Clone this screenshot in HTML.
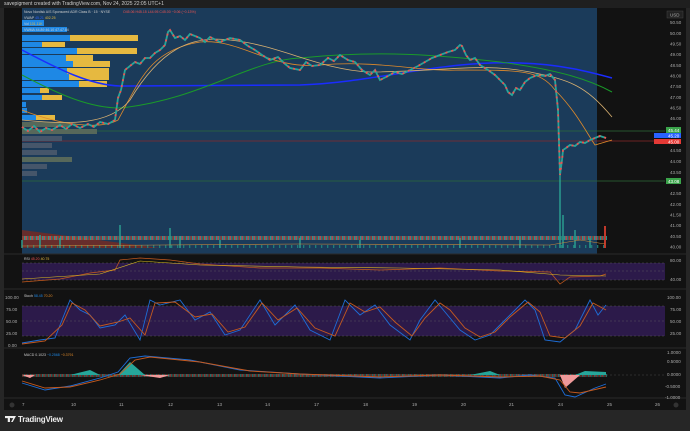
<!DOCTYPE html>
<html><head><meta charset="utf-8"><style>
*{margin:0;padding:0;box-sizing:border-box}
body{width:690px;height:431px;background:#262626;font-family:"Liberation Sans",sans-serif;overflow:hidden;position:relative;color:#bbb}
.top{position:absolute;left:0;top:0;width:690px;height:8px;background:#1f1f1f;font-size:5px;color:#ccc;padding-left:4px;line-height:8px}
svg{position:absolute;left:0;top:0}
.ax{font-size:4.5px;fill:#aaa}
</style></head><body>
<div class="top">savepigment created with TradingView.com, Nov 24, 2025 22:05 UTC+1</div>
<svg width="690" height="431" viewBox="0 0 690 431">
<defs>
<pattern id="vol" width="6" height="20" patternUnits="userSpaceOnUse">
<rect x="0" y="8" width="1.3" height="12" fill="#26a69a"/><rect x="1.5" y="12" width="1.3" height="8" fill="#ef5350"/><rect x="3" y="5" width="1.3" height="15" fill="#1f8a80"/><rect x="4.5" y="10" width="1.3" height="10" fill="#c0392b"/>
</pattern>
</defs>
<rect x="4" y="8" width="682" height="402" fill="#121212"/>
<rect x="22" y="8" width="575" height="246" fill="#1b3b5a"/>
<line x1="4" y1="254" x2="686" y2="254" stroke="#2a2a2a"/>
<line x1="4" y1="289" x2="686" y2="289" stroke="#2a2a2a"/>
<line x1="4" y1="348" x2="686" y2="348" stroke="#2a2a2a"/>
<line x1="4" y1="398" x2="686" y2="398" stroke="#2a2a2a"/>
<g class="ax">
<rect x="667" y="11" width="16" height="7" fill="#222" stroke="#444" stroke-width=".5"/><text x="670" y="16.5">USD</text>
<text x="670" y="24">50.50</text><text x="670" y="35">50.00</text><text x="670" y="45.5">49.50</text><text x="670" y="56">49.00</text><text x="670" y="67">48.50</text><text x="670" y="77.5">48.00</text><text x="670" y="88">47.50</text><text x="670" y="99">47.00</text><text x="670" y="109.5">46.50</text><text x="670" y="120">46.00</text><text x="670" y="152">44.50</text><text x="670" y="163">44.00</text><text x="670" y="174">43.50</text><text x="670" y="195">42.50</text><text x="670" y="206">42.00</text><text x="670" y="216.5">41.50</text><text x="670" y="227">41.00</text><text x="670" y="238">40.50</text><text x="670" y="248.5">40.00</text>
<text x="670" y="262">80.00</text><text x="670" y="281">40.00</text>
<text x="667" y="299">100.00</text><text x="670" y="311">75.00</text><text x="670" y="323">50.00</text><text x="670" y="335">25.00</text>
<text x="667" y="354">1.0000</text><text x="667" y="363">0.5000</text><text x="667" y="376">0.0000</text><text x="665" y="388">-0.5000</text><text x="665" y="399">-1.0000</text>
<text x="5" y="299">100.00</text><text x="6" y="311">75.00</text><text x="6" y="323">50.00</text><text x="6" y="335">25.00</text><text x="8" y="347">0.00</text>
</g>
<line x1="22" y1="131" x2="665" y2="131" stroke="#2d6b3a" stroke-width=".7"/>
<line x1="22" y1="141" x2="665" y2="141" stroke="#8b2a2a" stroke-width=".7"/>
<line x1="22" y1="181" x2="665" y2="181" stroke="#2d6b3a" stroke-width=".7"/>
<rect x="666" y="127" width="15" height="6" fill="#3aa34a"/><text x="668" y="132" font-size="4.5" fill="#fff">45.44</text>
<rect x="654" y="133" width="12" height="5" fill="#2962ff"/><rect x="666" y="133" width="15" height="5" fill="#2962ff"/><text x="668" y="137.5" font-size="4.5" fill="#fff">45.20</text>
<rect x="654" y="139" width="12" height="5" fill="#e53935"/><rect x="666" y="139" width="15" height="5" fill="#e53935"/><text x="668" y="143.5" font-size="4.5" fill="#fff">45.00</text>
<rect x="666" y="178" width="15" height="6" fill="#3aa34a"/><text x="668" y="183" font-size="4.5" fill="#fff">43.08</text>
<g>
<rect x="22" y="20" width="22" height="6" fill="#1e88e5"/><rect x="22" y="27" width="45" height="5" fill="#1e88e5"/><rect x="22" y="35" width="70" height="6" fill="#1e88e5"/><rect x="70" y="35" width="68" height="6" fill="#e6b940"/>
<rect x="22" y="42" width="20" height="5" fill="#1e88e5"/><rect x="42" y="42" width="23" height="5" fill="#e6b940"/>
<rect x="22" y="48" width="55" height="6" fill="#1e88e5"/><rect x="77" y="48" width="60" height="6" fill="#e6b940"/>
<rect x="22" y="55" width="44" height="6" fill="#1e88e5"/><rect x="66" y="55" width="27" height="6" fill="#e6b940"/>
<rect x="22" y="61" width="51" height="6" fill="#1e88e5"/><rect x="73" y="61" width="37" height="6" fill="#e6b940"/>
<rect x="22" y="68" width="45" height="6" fill="#1e88e5"/><rect x="67" y="68" width="42" height="6" fill="#e6b940"/>
<rect x="22" y="74" width="47" height="6" fill="#1e88e5"/><rect x="69" y="74" width="40" height="6" fill="#e6b940"/>
<rect x="22" y="81" width="57" height="6" fill="#1e88e5"/><rect x="79" y="81" width="28" height="6" fill="#e6b940"/>
<rect x="22" y="88" width="18" height="5" fill="#1e88e5"/><rect x="40" y="88" width="9" height="5" fill="#e6b940"/>
<rect x="22" y="95" width="20" height="5" fill="#1e88e5"/><rect x="42" y="95" width="20" height="5" fill="#e6b940"/>
<rect x="22" y="102" width="4" height="5" fill="#1e88e5"/><rect x="22" y="108" width="5" height="5" fill="#1e88e5"/>
<rect x="22" y="115" width="14" height="5" fill="#1e88e5"/><rect x="36" y="115" width="19" height="5" fill="#e6b940"/>
<rect x="22" y="122" width="48" height="5" fill="#57685a"/><rect x="22" y="129" width="75" height="5" fill="#57685a"/>
<rect x="22" y="136" width="40" height="5" fill="#46566a"/><rect x="22" y="143" width="30" height="5" fill="#46566a"/>
<rect x="22" y="150" width="35" height="5" fill="#46566a"/><rect x="22" y="157" width="50" height="5" fill="#57685a"/>
<rect x="22" y="164" width="25" height="5" fill="#46566a"/><rect x="22" y="171" width="15" height="5" fill="#46566a"/>
</g>
<polygon points="22,230 160,248 22,248" fill="#7a2a20" opacity=".8"/>
<rect x="22" y="236" width="585" height="12" fill="url(#vol)" opacity=".85"/>
<path d="M22 248 V240 M40 248 V235 M60 248 V238 M120 248 V225 M170 248 V228 M180 248 V236 M220 248 V240 M300 248 V238 M360 248 V240 M460 248 V238 M520 248 V236 M560 248 V170 M563 248 V215 M575 248 V230 M590 248 V238" stroke="#2a9d8f" stroke-width="1.5"/>
<rect x="604" y="226" width="2" height="22" fill="#c0392b"/>
<path d="M22 246 L300 244 L550 245 L580 240 L605 244" stroke="#c98a3a" stroke-width=".6" fill="none"/>
<path d="M22 50 C60 70 90 85 120 86 L300 85 C380 82 440 60 520 63 C560 64 590 72 612 78" stroke="#1a2cff" stroke-width="1.5" fill="none"/>
<path d="M22 75 C60 95 90 108 120 108 C200 100 250 60 300 58 C380 50 440 55 500 62 C560 70 590 80 612 92" stroke="#1a9a2a" stroke-width="1" fill="none"/>
<path d="M22 110 C60 125 100 130 118 120 C140 80 150 50 200 42 C240 38 270 70 320 65 C380 60 420 72 460 70 C520 70 540 70 555 90 C575 110 585 130 595 145 L612 140" stroke="#e08a2a" stroke-width=".8" fill="none"/>
<path d="M22 120 C70 125 110 125 130 100 C160 50 190 35 230 40 C280 45 320 70 370 72 C440 72 480 62 530 72 C570 80 585 85 612 117" stroke="#d8b070" stroke-width=".8" fill="none"/>
<g id="px">
<path id="pp" d="M22 127 L28 131 L34 126 L40 132 L46 128 L52 130 L60 125 L66 129 L72 124 L80 128 L88 124 L94 127 L100 122 L108 124 L115 120 L118 98 L121 90 L125 70 L130 66 L135 62 L140 64 L145 58 L150 58 L155 53 L160 50 L165 45 L168 32 L170 30 L175 38 L180 36 L185 40 L190 34 L200 38 L205 42 L210 37 L220 42 L230 38 L240 40 L248 46 L255 50 L262 55 L270 60 L278 57 L285 64 L290 68 L300 70 L306 62 L312 66 L320 65 L328 58 L334 61 L340 55 L348 60 L355 62 L362 70 L370 75 L375 70 L380 80 L388 76 L395 72 L402 74 L410 70 L418 66 L425 62 L432 58 L440 55 L448 52 L455 50 L460 45 L462 46 L466 55 L470 60 L475 58 L480 65 L488 70 L495 75 L500 80 L505 85 L508 92 L512 95 L516 88 L520 90 L525 82 L530 78 L537 75 L545 76 L550 74 L555 80 L558 110 L560 175 L562 160 L563 150 L566 148 L570 145 L575 146 L580 142 L585 143 L590 140 L595 138 L600 136 L606 138" stroke="#26a69a" stroke-width="1.8" fill="none"/>
</g>
<path d="M22 127 L28 131 L34 126 L40 132 L46 128 L52 130 L60 125 L66 129 L72 124 L80 128 L88 124 L94 127 L100 122 L108 124 L115 120 L118 98 L121 90 L125 70 L130 66 L135 62 L140 64 L145 58 L150 58 L155 53 L160 50 L165 45 L168 32 L170 30 L175 38 L180 36 L185 40 L190 34 L200 38 L205 42 L210 37 L220 42 L230 38 L240 40 L248 46 L255 50 L262 55 L270 60 L278 57 L285 64 L290 68 L300 70 L306 62 L312 66 L320 65 L328 58 L334 61 L340 55 L348 60 L355 62 L362 70 L370 75 L375 70 L380 80 L388 76 L395 72 L402 74 L410 70 L418 66 L425 62 L432 58 L440 55 L448 52 L455 50 L460 45 L462 46 L466 55 L470 60 L475 58 L480 65 L488 70 L495 75 L500 80 L505 85 L508 92 L512 95 L516 88 L520 90 L525 82 L530 78 L537 75 L545 76 L550 74 L555 80 L558 110 L560 175 L562 160 L563 150 L566 148 L570 145 L575 146 L580 142 L585 143 L590 140 L595 138 L600 136 L606 138" stroke="#ef5350" stroke-width="1.8" fill="none" stroke-dasharray="2,4"/>
<rect x="22" y="263" width="643" height="17" fill="#2c1a4a"/>
<path d="M22 263 H665 M22 280 H665 M22 271 H665" stroke="#666" stroke-width=".4" stroke-dasharray="2,2"/>
<path d="M22 282 L60 279 L90 273 L115 270 L120 260 L140 258 L170 260 L200 264 L260 268 L320 268 L380 270 L440 268 L500 271 L550 272 L560 284 L570 277 L600 276 L606 274" stroke="#c65a1e" stroke-width=".7" fill="none"/>
<path d="M22 279 L100 274 L140 261 L200 265 L300 267 L400 268 L500 270 L560 275 L606 276" stroke="#e0c020" stroke-width=".6" fill="none"/>
<rect x="22" y="306" width="643" height="30" fill="#2c1a4a"/>
<path d="M22 306 H665 M22 336 H665 M22 321 H665" stroke="#666" stroke-width=".4" stroke-dasharray="2,2"/>
<path d="M22 343 L40 340 L55 338 L62 320 L70 300 L80 310 L90 315 L100 328 L115 325 L125 315 L140 340 L150 300 L160 305 L180 300 L195 320 L210 312 L225 335 L240 330 L260 300 L275 325 L295 305 L310 330 L330 340 L345 300 L360 315 L375 305 L390 325 L410 340 L420 320 L435 300 L445 312 L460 330 L475 340 L490 335 L505 320 L525 300 L535 310 L545 340 L560 342 L575 330 L590 300 L598 315 L606 305" stroke="#1e6ed8" stroke-width=".9" fill="none"/>
<path d="M22 344 L45 341 L62 325 L72 303 L85 310 L100 326 L118 322 L130 318 L145 335 L155 303 L175 302 L195 317 L212 314 L228 332 L245 327 L262 303 L278 320 L297 308 L315 328 L335 336 L350 303 L365 312 L380 307 L395 322 L412 336 L425 318 L440 303 L450 310 L465 328 L480 337 L495 332 L510 317 L528 302 L540 312 L550 336 L565 338 L580 326 L593 303 L606 310" stroke="#c65a1e" stroke-width=".9" fill="none"/>
<path d="M22 375 H665" stroke="#555" stroke-width=".4" stroke-dasharray="2,2"/>
<rect x="22" y="374" width="585" height="3" fill="url(#vol)" opacity=".6"/>
<path d="M70 375 L90 370 L100 375 Z M118 375 L130 362 L145 375 Z M470 375 L490 371 L500 375 Z M575 375 L585 371 L606 372 L606 375 Z" fill="#26a69a"/>
<path d="M560 375 L565 388 L580 375 Z M22 375 L30 378 L35 375 Z M140 375 L160 378 L170 375 Z" fill="#ef9a9a"/>
<path d="M22 383 L45 390 L70 386 L100 378 L118 372 L130 358 L145 356 L190 360 L240 370 L300 374 L380 378 L440 375 L500 378 L530 375 L555 378 L565 395 L575 397 L595 388 L606 384" stroke="#1e6ed8" stroke-width=".9" fill="none"/>
<path d="M22 381 L45 388 L70 387 L100 380 L120 374 L135 360 L150 357 L200 362 L250 371 L300 374 L380 377 L440 375 L500 377 L540 376 L560 380 L570 392 L580 393 L606 387" stroke="#c65a1e" stroke-width=".9" fill="none"/>
<g class="ax">
<text x="22" y="406">7</text><text x="71" y="406">10</text><text x="119" y="406">11</text><text x="168" y="406">12</text><text x="217" y="406">13</text><text x="265" y="406">14</text><text x="314" y="406">17</text><text x="363" y="406">18</text><text x="412" y="406">19</text><text x="461" y="406">20</text><text x="509" y="406">21</text><text x="558" y="406">24</text><text x="607" y="406">25</text><text x="655" y="406">26</text>
</g>
<circle cx="12" cy="405" r="2.5" fill="#333"/><circle cx="676" cy="405" r="2.5" fill="#333"/>
<g font-size="3.5" fill="#ccc">
<text x="24" y="13">Novo Nordisk A/S Sponsored ADR Class B · 15 · NYSE</text><text x="123" y="13" fill="#ef5350">O45.06 H45.15 L44.95 C45.00 −0.06 (−0.13%)</text>
<text x="24" y="19">VWAP <tspan fill="#2962ff">45.21</tspan> <tspan fill="#e6b940">402.25</tspan></text>
<text x="24" y="25">Vol <tspan fill="#e6b940">101.11K</tspan></text>
<text x="24" y="31">VWMA 44.89 46.10 47.47.84</text>
<text x="24" y="260">RSI <tspan fill="#ef5350">45.20</tspan> <tspan fill="#e6b940">40.75</tspan></text>
<text x="24" y="297">Stoch <tspan fill="#1e88e5">58.45</tspan> <tspan fill="#e08a2a">70.20</tspan></text>
<text x="24" y="356">MACD 0.1023 <tspan fill="#1e88e5">−0.2568</tspan> <tspan fill="#e08a2a">−0.3791</tspan></text>
</g>
</svg>
<div style="position:absolute;left:5px;top:415px;font-size:8px;font-weight:bold;color:#eee;letter-spacing:-.2px"><span style="display:inline-block;width:11px;height:6px;background:#eee;margin-right:2px;clip-path:polygon(0 0,45% 0,45% 100%,25% 100%,25% 35%,0 35%,0 0,55% 0,100% 0,70% 100%,55% 100%,75% 35%,55% 35%)"></span>TradingView</div>
</body></html>
